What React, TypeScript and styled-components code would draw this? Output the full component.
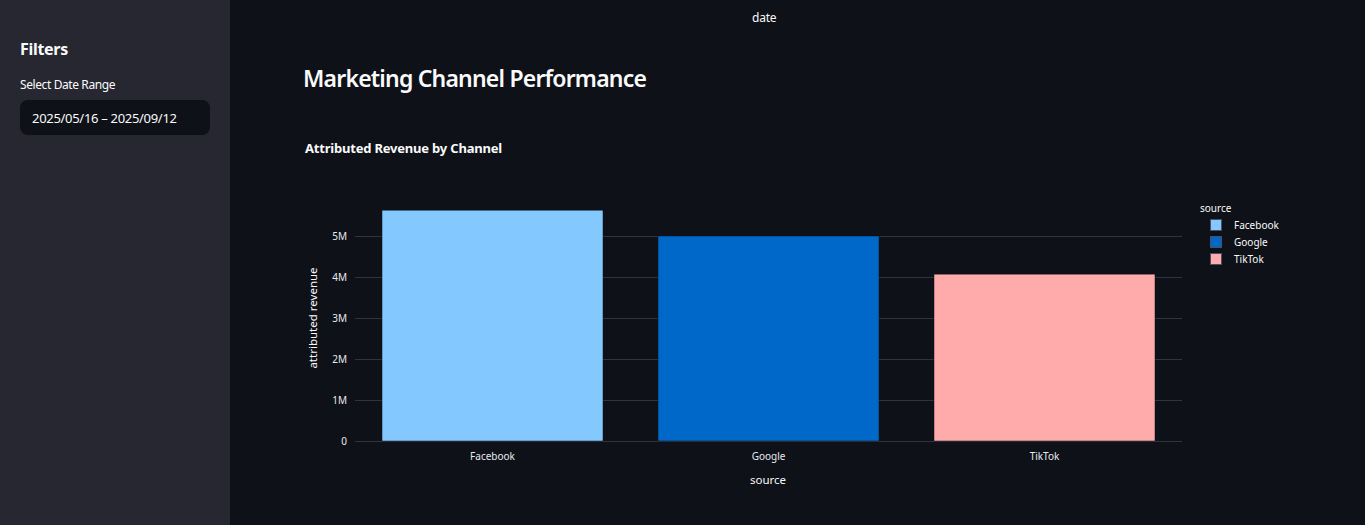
import React from "react";
import styled, { createGlobalStyle } from "styled-components";

const GlobalStyle = createGlobalStyle`
  html, body { margin: 0; padding: 0; background: #0e1117; }
  body { font-family: "Source Sans Pro", "Noto Sans", sans-serif; color: #fafafa; }
  * { box-sizing: border-box; }
`;

const Layout = styled.div`
  display: grid;
  grid-template-columns: 230px 1fr;
  width: 1365px;
  height: 525px;
  overflow: hidden;
`;

const Sidebar = styled.aside`
  background: #262730;
  padding: 36px 20px 0 20px;
  display: flex;
  flex-direction: column;
`;

const SidebarHeading = styled.h2`
  margin: 0;
  font-size: 16px;
  letter-spacing: -0.3px;
  font-weight: 700;
  line-height: 26px;
  color: #fafafa;
`;

const FieldLabel = styled.label`
  margin-top: 14px;
  font-size: 12px;
  letter-spacing: -0.4px;
  line-height: 18px;
  color: #fafafa;
`;

const DateInput = styled.div`
  margin-top: 6px;
  height: 35px;
  border-radius: 8px;
  background: #0e1117;
  display: flex;
  align-items: center;
  padding-left: 12px;
  font-size: 13px;
  letter-spacing: -0.3px;
  color: #fafafa;
`;

const Main = styled.main`
  display: flex;
  flex-direction: column;
  padding-left: 70px;
`;

const TopLabel = styled.div`
  height: 34px;
  display: flex;
  align-items: center;
  padding-left: 452px;
  font-size: 12px;
  letter-spacing: -0.2px;
  color: #fafafa;
`;

const Title = styled.h1`
  margin: 28px 0 0 3px;
  font-size: 23px;
  letter-spacing: -0.8px;
  font-weight: 600;
  line-height: 32px;
  color: #fafafa;
`;

const ChartTitle = styled.div`
  margin: 45px 0 0 5px;
  font-size: 13px;
  letter-spacing: -0.2px;
  font-weight: 700;
  line-height: 18px;
  color: #fafafa;
`;

const ChartSvg = styled.svg`
  display: block;
  margin-top: 13px;
  font-family: "Source Sans Pro", "Noto Sans", sans-serif;
`;

const data = [
  { name: "Facebook", value: 5.63, color: "#83c9ff", x: 82 },
  { name: "Google", value: 5.0, color: "#0068c9", x: 358 },
  { name: "TikTok", value: 4.07, color: "#ffabab", x: 634 },
];

const Y0 = 271;
const PER = 41;

function Chart() {
  const ticks = [0, 1, 2, 3, 4, 5];
  return (
    <ChartSvg width={1060} height={330} viewBox="0 0 1060 330">
      {ticks.map((t) => (
        <line key={t} x1={55} x2={882} y1={Y0 - t * PER + 0.5} y2={Y0 - t * PER + 0.5} stroke="#31333f" strokeWidth={1} />
      ))}
      {data.map((d) => (
        <rect
          key={d.name}
          x={d.x}
          y={Y0 - d.value * PER}
          width={221}
          height={d.value * PER}
          fill={d.color}
          stroke="#0e1117"
          strokeWidth={0.5}
        />
      ))}
      {ticks.map((t) => (
        <text key={t} x={47} y={Y0 - t * PER} textAnchor="end" dominantBaseline="central" fontSize={10} fill="#e6eaf1">
          {t === 0 ? "0" : `${t}M`}
        </text>
      ))}
      {data.map((d) => (
        <text key={d.name} x={d.x + 110.5} y={286} textAnchor="middle" dominantBaseline="central" fontSize={10} fill="#e6eaf1">
          {d.name}
        </text>
      ))}
      <text x={468} y={309} textAnchor="middle" dominantBaseline="central" fontSize={11.5} fill="#fafafa">
        source
      </text>
      <text
        x={12}
        y={148}
        textAnchor="middle"
        dominantBaseline="central"
        fontSize={11.5}
        fill="#fafafa"
        transform="rotate(-90 12 148)"
      >
        attributed revenue
      </text>
      <text x={900} y={38} dominantBaseline="central" fontSize={10} fill="#fafafa">
        source
      </text>
      {data.map((d, i) => (
        <g key={d.name}>
          <rect x={910.5} y={49.5 + i * 17} width={11} height={11} fill={d.color} stroke="#4a5060" strokeWidth={1} />
          <text x={934} y={55 + i * 17} dominantBaseline="central" fontSize={10} fill="#fafafa">
            {d.name}
          </text>
        </g>
      ))}
    </ChartSvg>
  );
}

export default function App() {
  return (
    <>
      <GlobalStyle />
      <Layout>
        <Sidebar>
          <SidebarHeading>Filters</SidebarHeading>
          <FieldLabel>Select Date Range</FieldLabel>
          <DateInput>2025/05/16 – 2025/09/12</DateInput>
        </Sidebar>
        <Main>
          <TopLabel>date</TopLabel>
          <Title>Marketing Channel Performance</Title>
          <ChartTitle>Attributed Revenue by Channel</ChartTitle>
          <Chart />
        </Main>
      </Layout>
    </>
  );
}
